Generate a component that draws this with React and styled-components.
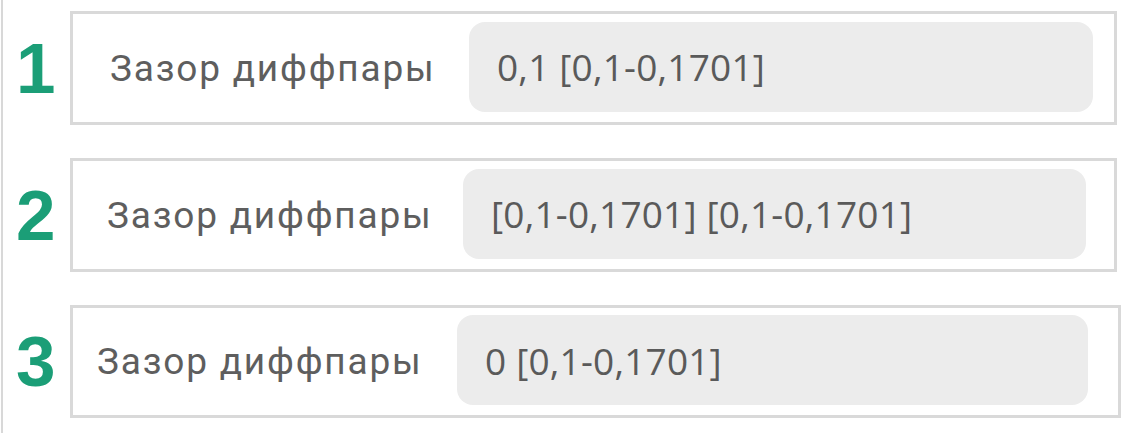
import React from 'react'
import styled, { createGlobalStyle } from 'styled-components';

const GlobalStyle = createGlobalStyle`
  html, body {
    margin: 0;
    padding: 0;
    background: #ffffff;
  }
`;

const Page = styled.div`
  width: 1130px;
  height: 433px;
  margin-left: 1px;
  border-left: 2px solid #d8d8d8;
  padding-top: 11px;
  box-sizing: border-box;
  display: flex;
  flex-direction: column;
  gap: 33px;
`;

const Row = styled.div`
  display: flex;
  align-items: center;
  padding-right: ${p => p.$right}px;
`;

const Num = styled.div`
  width: 67px;
  padding-left: 13px;
  box-sizing: border-box;
  font-family: "Liberation Sans", Arial, sans-serif;
  font-weight: 700;
  font-size: 71px;
  line-height: 1;
  color: #1b9e77;
`;

const Box = styled.div`
  flex: 1;
  height: ${p => p.$h}px;
  box-sizing: border-box;
  border: 3px solid #d9d9d9;
  display: flex;
  align-items: center;
  padding-left: ${p => p.$labelPad}px;
  padding-right: ${p => p.$inputPad}px;
`;

const Label = styled.div`
  flex: none;
  width: ${p => p.$w}px;
  font-family: Roboto, "Noto Sans", sans-serif;
  font-size: 37px;
  letter-spacing: 1.8px;
  color: #5e5e5e;
  white-space: nowrap;
`;

const Field = styled.div`
  flex: 1;
  height: 90px;
  margin-bottom: 3px;
  border-radius: 16px;
  background: #ececec;
  display: flex;
  align-items: center;
  padding-left: 28px;
  font-family: "Open Sans", sans-serif;
  font-size: 37px;
  letter-spacing: 0.2px;
  color: #5a5a5a;
  white-space: nowrap;
`;

const rows = [
  { n: 1, value: '0,1 [0,1-0,1701]', labelPad: 37, labelW: 359, inputPad: 21, right: 14, h: 114 },
  { n: 2, value: '[0,1-0,1701] [0,1-0,1701]', labelPad: 34, labelW: 356, inputPad: 28, right: 14, h: 114 },
  { n: 3, value: '0 [0,1-0,1701]', labelPad: 24, labelW: 360, inputPad: 30, right: 10, h: 113 },
];

const App = () => {
  return (
    <>
      <GlobalStyle />
      <Page>
        {rows.map(r => (
          <Row key={r.n} $right={r.right}>
            <Num>{r.n}</Num>
            <Box $h={r.h} $labelPad={r.labelPad} $inputPad={r.inputPad}>
              <Label $w={r.labelW}>Зазор диффпары</Label>
              <Field>{r.value}</Field>
            </Box>
          </Row>
        ))}
      </Page>
    </>
  )
}

export default App
